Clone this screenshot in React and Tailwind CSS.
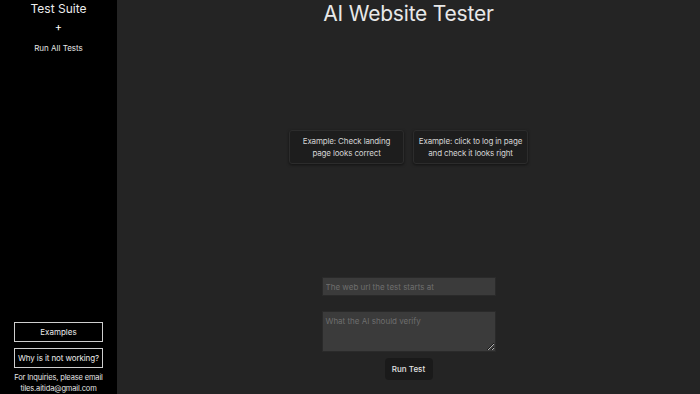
export default function App() {
  const examples = [
    ["Example: Check landing", "page looks correct"],
    ["Example: click to log in page", "and check it looks right"],
  ];

  return (
    <div className="flex h-[394px] w-[700px] overflow-hidden bg-[#242424] font-['Inter',sans-serif] text-white">
      <aside className="flex w-[117px] shrink-0 flex-col items-center bg-black">
        <h2 className="mt-[1px] text-[12px] leading-[15px] text-[#ececec]">Test Suite</h2>
        <button className="mt-[5px] text-[11px] leading-[12px] text-white">+</button>
        <button className="mt-[10px] text-[8px] leading-[11px] text-[#e6e6e6]">Run All Tests</button>

        <div className="mt-auto flex w-full flex-col items-center">
          <button className="h-[20px] w-[89px] border border-[#cfcfcf] text-[8px] text-[#ececec]">
            Examples
          </button>
          <button className="mt-[6px] h-[20px] w-[89px] border border-[#cfcfcf] text-[8px] tracking-[-0.1px] text-[#ececec]">
            Why is it not working?
          </button>
          <p className="mt-[4px] whitespace-nowrap text-center text-[7.5px] leading-[11px] tracking-[-0.15px] text-[#e6e6e6]">
            For Inquiries, please email
            <br />
            tiles.aitida@gmail.com
          </p>
        </div>
      </aside>

      <main className="flex flex-1 flex-col items-center">
        <h1 className="mt-[1px] text-[21px] leading-[26px] font-normal tracking-[-0.2px] text-[#e8e8e8]">
          AI Website Tester
        </h1>

        <div className="mt-[103px] flex gap-[9px]">
          {examples.map(([a, b]) => (
            <div
              key={a}
              className="flex h-[34px] w-[115px] flex-col items-center justify-center whitespace-nowrap rounded-[3px] border border-[#2c2c2c] bg-[#1d1d1d] text-center text-[8px] leading-[12px] tracking-[-0.15px] text-[#d4d4d4] shadow-[0_1px_3px_rgba(0,0,0,0.5)]"
            >
              <span>{a}</span>
              <span>{b}</span>
            </div>
          ))}
        </div>

        <div className="mt-auto mb-[14px] flex flex-col items-center">
          <input
            placeholder="The web url the test starts at"
            className="h-[19px] w-[174px] border border-[#2a2a2a] bg-[#3b3b3b] px-[3px] text-[8px] text-white placeholder-[#6e6e6e] outline-none"
          />
          <textarea
            placeholder="What the AI should verify"
            className="mt-[15px] h-[41px] w-[174px] resize-y border border-[#2a2a2a] bg-[#3b3b3b] px-[3px] py-[3px] text-[8px] text-white placeholder-[#6e6e6e] outline-none"
          />
          <button className="mt-[6px] h-[22px] w-[48px] rounded-[4px] bg-[#1a1a1a] text-[8px] font-medium text-[#e2e2e2]">
            Run Test
          </button>
        </div>
      </main>
    </div>
  );
}
